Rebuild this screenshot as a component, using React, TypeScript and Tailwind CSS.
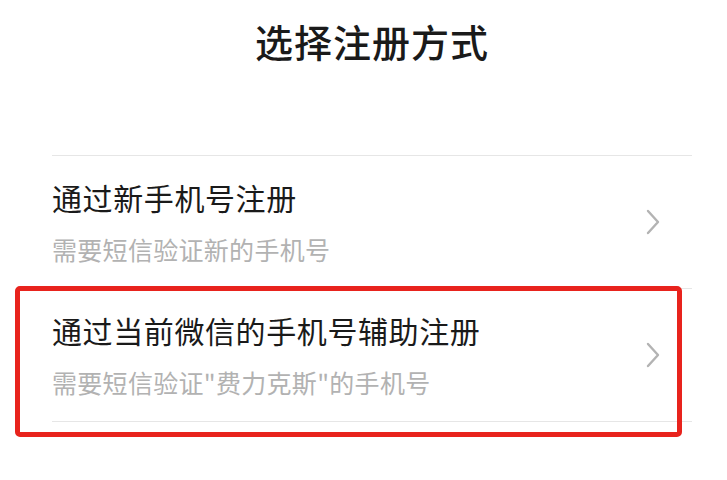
import React from 'react';

const options = [
  { id: 'new', title: '通过新手机号注册', desc: '需要短信验证新的手机号', marked: false },
  { id: 'assist', title: '通过当前微信的手机号辅助注册', desc: '需要短信验证"费力克斯"的手机号', marked: true },
];

const Chevron = () => (
  <svg width="16" height="28" viewBox="0 0 16 28" fill="none" className="shrink-0">
    <path d="M3 3 L13 14 L3 25" stroke="#b3b3b3" strokeWidth="2.4" strokeLinecap="round" strokeLinejoin="round" />
  </svg>
);

const App: React.FC = () => {
  return (
    <div
      className="min-h-screen w-full bg-white"
      style={{ fontFamily: '"Noto Sans CJK SC", "Noto Sans", sans-serif' }}
    >
      <div className="ml-[52px] mr-[35px]">
        <h1 className="pt-[17px] text-center text-[38px] leading-[48px] font-medium tracking-[1px] text-[#1a1a1a]">
          选择注册方式
        </h1>

        <div className="mt-[90px] border-t border-[#e6e6e6]">
          {options.map((opt) => (
            <div key={opt.id} className="relative flex items-center justify-between border-b border-[#e6e6e6] pt-[21px] pb-[22px]">
              <div className="flex flex-col gap-[15px]">
                <span className="text-[30px] leading-[40px] tracking-[0.6px] text-[#1a1a1a]">{opt.title}</span>
                <span className="text-[25px] leading-[34px] tracking-[0.3px] text-[#b2b2b2]">{opt.desc}</span>
              </div>
              <div className="mr-[31px]">
                <Chevron />
              </div>
              {opt.marked && (
                <div className="pointer-events-none absolute -left-[37px] right-[10px] -top-[3px] -bottom-[16px] rounded-[5px] border-[5px] border-[#e8231d]" />
              )}
            </div>
          ))}
        </div>
      </div>
    </div>
  );
};

export default App;
